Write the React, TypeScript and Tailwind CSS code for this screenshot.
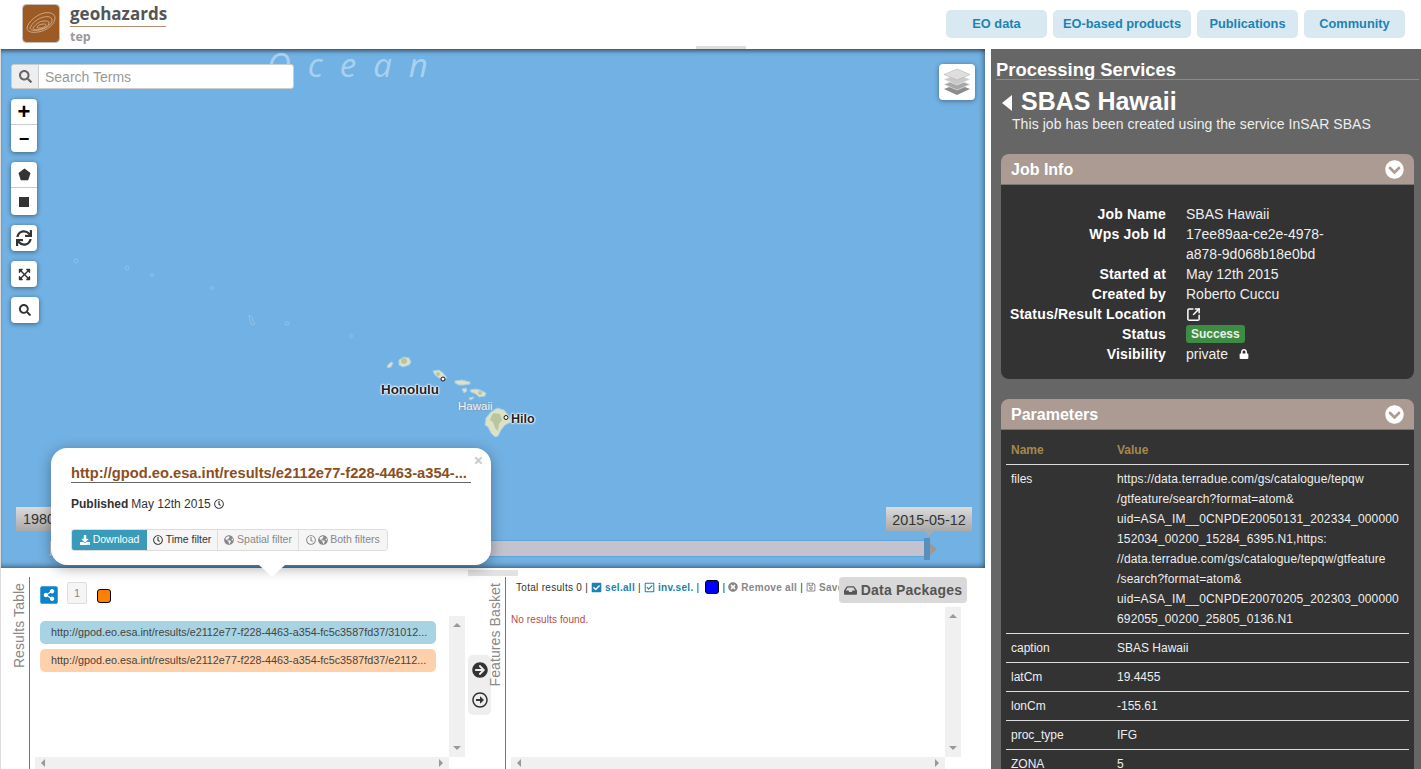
import React from "react";
import {
  FaSearch,
  FaSync,
  FaExpandArrowsAlt,
  FaShareAltSquare,
  FaArrowCircleRight,
  FaRegArrowAltCircleRight,
  FaRegClock,
  FaGlobeAmericas,
  FaDownload,
  FaCheckSquare,
  FaRegCheckSquare,
  FaPlusCircle,
  FaRegSave,
  FaInbox,
  FaLock,
  FaChevronCircleDown,
  FaTimes,
} from "react-icons/fa";
import { SquareArrowOutUpRight } from "lucide-react";

const navItems = [
  { label: "EO data", width: "w-[101px]" },
  { label: "EO-based products", width: "w-[138px]" },
  { label: "Publications", width: "w-[101px]" },
  { label: "Community", width: "w-[101px]" },
];

const jobRows = [
  { name: "Job Name", value: "SBAS Hawaii" },
  { name: "Wps Job Id", value: "17ee89aa-ce2e-4978-\na878-9d068b18e0bd" },
  { name: "Started at", value: "May 12th 2015" },
  { name: "Created by", value: "Roberto Cuccu" },
];

const filesLines = [
  "https://data.terradue.com/gs/catalogue/tepqw",
  "/gtfeature/search?format=atom&",
  "uid=ASA_IM__0CNPDE20050131_202334_000000",
  "152034_00200_15284_6395.N1,https:",
  "//data.terradue.com/gs/catalogue/tepqw/gtfeature",
  "/search?format=atom&",
  "uid=ASA_IM__0CNPDE20070205_202303_000000",
  "692055_00200_25805_0136.N1",
];

const paramRows = [
  { name: "caption", value: "SBAS Hawaii" },
  { name: "latCm", value: "19.4455" },
  { name: "lonCm", value: "-155.61" },
  { name: "proc_type", value: "IFG" },
  { name: "ZONA", value: "5" },
];

// map drawing: viewBox uses page coordinates
const MapArt = () => (
  <svg className="absolute inset-0" width="984" height="519" viewBox="1 49 984 519">
    <g fill="none" stroke="#8fc2ea" strokeWidth="1">
      <circle cx="76" cy="261" r="2" />
      <circle cx="127" cy="268" r="2" />
      <circle cx="152" cy="275" r="1.5" />
      <circle cx="212" cy="288" r="1.5" />
      <path d="M249 315l3 2 1 4 2 3-3 1-2-4z" />
      <rect x="285" y="322" width="4" height="3" rx="1" />
      <circle cx="351" cy="336" r="1.5" />
    </g>
    <g fill="#dde1c8" stroke="#a6cfe6" strokeWidth="1">
      <path d="M399 360l5-3 5 1 2 4-2 3-6 2-4-2z" />
      <path d="M387 366l4-4 2 1-2 4-3 1z" />
      <path d="M433 371l6-1 4 3 4 5-3 1-5-1-4-3z" />
      <path d="M455 381l7-1 8 2 0 2-6 1-5 0-4-2z" />
      <path d="M462 389l4-1 1 3-3 2z" />
      <path d="M470 390l6-1 4 1 6 3-1 3-6 1-3-3-5-2z" />
      <path d="M469 398l4-1 1 1-4 2z" />
      <path d="M497 408l7 2 5 6 2 6-6 3-4 5-3 6-3 1-4-4-3-6-3-2 1-7 5-6z" />
    </g>
    <g fill="#b9c7a0">
      <path d="M494 413l6 1 2 6-3 4-1 7-3-3-2-6-3-2 2-5z" />
      <circle cx="404" cy="361" r="3" />
      <circle cx="438" cy="374" r="2" />
      <circle cx="480" cy="393" r="2" />
    </g>
    <circle cx="443" cy="379" r="2" fill="#fff" stroke="#111" strokeWidth="1" />
    <circle cx="506" cy="417.5" r="2" fill="#fff" stroke="#111" strokeWidth="1" />
  </svg>
);

const ControlButton = ({ children, wide }: { children: React.ReactNode; wide?: boolean }) => (
  <div
    className={`flex h-[26px] items-center justify-center rounded-[4px] bg-white text-[#333] shadow-[0_1px_5px_rgba(0,0,0,0.45)] ${
      wide ? "w-[28px]" : "w-[26px]"
    }`}
  >
    {children}
  </div>
);

const ControlGroup = ({ top, bottom }: { top: React.ReactNode; bottom: React.ReactNode }) => (
  <div className="flex w-[26px] flex-col divide-y divide-[#ccc] rounded-[4px] bg-white text-[#333] shadow-[0_1px_5px_rgba(0,0,0,0.45)]">
    <div className="flex h-[26px] items-center justify-center">{top}</div>
    <div className="flex h-[27px] items-center justify-center">{bottom}</div>
  </div>
);

const VScroll = ({ h }: { h: string }) => (
  <div className={`flex w-[16px] shrink-0 flex-col items-center justify-between bg-[#f0f0f0] py-[7px] ${h}`}>
    <div className="h-0 w-0 border-x-[4px] border-b-[4px] border-x-transparent border-b-[#999]" />
    <div className="h-0 w-0 border-x-[4px] border-t-[4px] border-x-transparent border-t-[#999]" />
  </div>
);

const HScroll = () => (
  <div className="flex h-[12px] items-center justify-between bg-[#f0f0f0] px-[6px]">
    <div className="h-0 w-0 border-y-[4px] border-r-[4px] border-y-transparent border-r-[#999]" />
    <div className="h-0 w-0 border-y-[4px] border-l-[4px] border-y-transparent border-l-[#999]" />
  </div>
);

const PanelHeader = ({ title }: { title: string }) => (
  <div className="flex h-[31px] items-center justify-between rounded-t-[8px] border-b border-[#777] bg-[#ab9b93] px-[10px] pt-px text-[16px] font-bold text-white">
    <span>{title}</span>
    <FaChevronCircleDown className="text-[19px] text-white" />
  </div>
);

const SideLabel = ({ children }: { children: React.ReactNode }) => (
  <div className="rotate-180 text-[14px] leading-[16px] tracking-[0.1px] text-[#888] [writing-mode:vertical-rl]">
    {children}
  </div>
);

export default function App() {
  return (
    <div className="relative flex h-[769px] w-[1421px] flex-col overflow-hidden bg-white font-['Liberation_Sans',Arial,sans-serif]">
      {/* Header */}
      <header className="flex h-[49px] shrink-0 items-start justify-between pl-[22px] pr-[16px]">
        <div className="flex items-start pt-[4px]">
          <svg width="38" height="39" viewBox="0 0 38 39" className="rounded-[4px]">
            <rect x="0.5" y="0.5" width="37" height="38" rx="4" fill="#9c5a24" stroke="#c8c0b8" />
            <g fill="none" stroke="#d9b99c" strokeWidth="0.8">
              <path d="M5 24c1-6 9-13 17-15 5-1 11 0 11 5 0 6-8 13-17 14-6 1-11 0-11-4z" />
              <path d="M8 24c2-5 8-10 14-11 4-1 8 0 8 3 0 5-7 9-13 10-5 1-9 0-9-2z" />
              <path d="M11 24c2-3 6-7 11-7 3 0 5 0 5 2 0 3-5 6-9 6-3 1-7 1-7-1z" />
              <path d="M15 23c1-2 4-3 7-3 1 0 2 0 2 1 0 1-3 3-5 3-2 0-4 0-4-1z" />
            </g>
          </svg>
          <div className="ml-[10px] w-[96px] font-['Open_Sans',sans-serif]">
            <div className="h-[23px] whitespace-nowrap border-b border-[#b98f6f] pb-[2px] text-[17px] font-bold leading-[20px] text-[#555]">
              geohazards
            </div>
            <div className="mt-[2px] text-[12.5px] font-bold leading-[15px] text-[#999]">tep</div>
          </div>
        </div>
        <nav className="flex gap-[6px] pt-[10px]">
          {navItems.map((item) => (
            <div
              key={item.label}
              className={`flex h-[28px] items-center justify-center rounded-[5px] bg-[#d9e9f1] text-[12.8px] font-bold text-[#1c83b4] ${item.width}`}
            >
              {item.label}
            </div>
          ))}
        </nav>
      </header>

      <div className="flex min-h-0 flex-1">
        {/* Left column */}
        <div className="flex w-[991px] shrink-0 flex-col border-l border-[#dcdcdc] pr-[6px]">
          {/* Map */}
          <div className="relative z-10 h-[519px] w-[984px] shrink-0 bg-[#72b1e3] shadow-[inset_0_5px_4px_-3px_rgba(0,0,0,0.55),inset_0_-5px_5px_-3px_rgba(0,0,0,0.4),inset_-5px_0_5px_-3px_rgba(0,0,0,0.3)]">
            <MapArt />
            <div className="absolute left-[266px] top-[-6px] font-['Open_Sans',sans-serif] text-[33px] italic leading-[44px] tracking-[17px] text-[#a9d1ef]">
              Ocean
            </div>
            <div className="absolute left-[695px] top-[-3px] h-[3px] w-[50px] bg-[#ddd]" />

            {/* Map labels */}
            <span className="absolute left-[380px] top-[333px] text-[13.4px] font-bold leading-[16px] text-[#222] [text-shadow:0_0_2px_#fff,0_0_2px_#fff,0_0_2px_#fff,0_0_3px_#fff]">
              Honolulu
            </span>
            <span className="absolute left-[457px] top-[350px] text-[11.5px] leading-[14px] text-[#f2f2f2] [text-shadow:0_0_2px_#7a8a99]">
              Hawaii
            </span>
            <span className="absolute left-[510px] top-[362px] text-[12.5px] font-bold leading-[16px] text-[#222] [text-shadow:0_0_2px_#fff,0_0_2px_#fff,0_0_2px_#fff,0_0_3px_#fff]">
              Hilo
            </span>

            {/* Search */}
            <div className="absolute left-[10px] top-[15px] flex h-[25px] w-[283px] overflow-hidden rounded-[3px] border border-[#ccc] bg-white">
              <div className="flex w-[27px] items-center justify-center border-r border-[#ccc] bg-[#eee] text-[#666]">
                <FaSearch className="text-[13px]" />
              </div>
              <div className="pl-[6px] text-[14px] leading-[25px] text-[#999]">Search Terms</div>
            </div>

            {/* Map controls */}
            <div className="absolute left-[10px] top-[50px] flex flex-col items-start gap-[10px]">
              <ControlGroup
                top={<span className="text-[22px] font-bold leading-none text-black">+</span>}
                bottom={<span className="text-[18px] font-bold leading-none text-black">−</span>}
              />
              <ControlGroup
                top={
                  <svg width="13" height="13" viewBox="0 0 13 13">
                    <path d="M6.5 0.5l6 4.4-2.3 7.4H2.8L0.5 4.9z" fill="#333" />
                  </svg>
                }
                bottom={<div className="h-[10px] w-[10px] bg-[#333]" />}
              />
              <ControlButton>
                <FaSync className="text-[16px]" />
              </ControlButton>
              <ControlButton>
                <FaExpandArrowsAlt className="text-[13px]" />
              </ControlButton>
              <ControlButton wide>
                <FaSearch className="text-[12px]" />
              </ControlButton>
            </div>

            {/* Layers */}
            <div className="absolute left-[938px] top-[15px] flex h-[36px] w-[36px] items-center justify-center rounded-[4px] bg-white shadow-[0_1px_5px_rgba(0,0,0,0.4)]">
              <svg width="28" height="28" viewBox="0 0 28 28">
                <path d="M14 16l13 5-13 6-13-6z" fill="#8c8c8c" />
                <path d="M14 11l13 5.5L14 22 1 16.5z" fill="#a8a8a8" stroke="#eee" strokeWidth="0.6" />
                <path d="M14 6l13 5.500L14 17 1 11.500z" fill="#c9c9c9" stroke="#eee" strokeWidth="0.6" />
                <path d="M14 1l13 5.500L14 12 1 6.500z" fill="#dedede" stroke="#aaa" strokeWidth="0.5" />
              </svg>
            </div>

            {/* Timeline */}
            <div className="absolute left-[15px] top-[458px] h-[24px] w-[60px] bg-gradient-to-b from-[#dcdcdc] to-[#a9a9a9] pl-[7px] text-[14.4px] leading-[25px] text-[#333]">
              1980
            </div>
            <div className="absolute left-[49px] top-[491px] flex h-[17px] w-[887px] items-center">
              <div className="h-full flex-1 border-y border-[#62a3d8] bg-[#c3c3cf]" />
              <div className="h-[22px] w-[6px] bg-[#5b8fbb]" />
              <div className="h-0 w-0 border-y-[6px] border-l-[7px] border-y-transparent border-l-[#999]" />
            </div>
            <div className="absolute left-[885px] top-[458px] h-[24px] w-[86px] bg-gradient-to-b from-[#dcdcdc] to-[#a9a9a9] text-center text-[14.4px] leading-[26px] text-[#333]">
              2015-05-12
              <div className="absolute left-[38px] top-[24px] h-0 w-0 border-x-[5px] border-t-[5px] border-x-transparent border-t-[#aaa]" />
            </div>

            {/* Popup */}
            <div className="absolute left-[50px] top-[399px] z-20 h-[117px] w-[440px] rounded-[16px] bg-white px-[20px] pt-[17px] shadow-[0_3px_14px_rgba(0,0,0,0.35)]">
              <FaTimes className="absolute right-[7px] top-[7px] text-[11px] text-[#ccc]" />
              <div className="whitespace-nowrap border-b border-[#666] pb-[1px] text-[14.7px] font-bold leading-[16px] text-[#8a4f1d]">
                http://gpod.eo.esa.int/results/e2112e77-f228-4463-a354-...
              </div>
              <div className="mt-[14px] flex items-center gap-[3px] text-[12px] leading-[14px] text-[#333]">
                <b>Published</b> May 12th 2015 <FaRegClock className="text-[10px]" />
              </div>
              <div className="mt-[18px] flex h-[22px] w-[317px] overflow-hidden rounded-[3px] border border-[#ddd] text-[10.5px]">
                <div className="flex w-[75px] items-center justify-center gap-[3px] bg-[#3a9ab9] text-white">
                  <FaDownload className="text-[10px]" /> Download
                </div>
                <div className="flex w-[71px] items-center justify-center gap-[3px] border-r border-[#ddd] bg-[#f5f5f5] text-[#333]">
                  <FaRegClock className="text-[10px]" /> Time filter
                </div>
                <div className="flex w-[81px] items-center justify-center gap-[3px] border-r border-[#ddd] bg-[#f5f5f5] text-[#888]">
                  <FaGlobeAmericas className="text-[10px]" /> Spatial filter
                </div>
                <div className="flex flex-1 items-center justify-center gap-[2px] bg-[#f5f5f5] text-[#888]">
                  <FaRegClock className="text-[10px]" />
                  <FaGlobeAmericas className="text-[10px]" /> Both filters
                </div>
              </div>
              <div className="absolute left-[208px] top-full h-0 w-0 border-x-[13px] border-t-[12px] border-x-transparent border-t-white" />
            </div>
          </div>

          {/* Bottom panels */}
          <div className="relative flex min-h-0 flex-1">
            <div className="absolute left-[467px] top-[2px] h-[6px] w-[50px] bg-[#e2e2e2]" />

            {/* Results table */}
            <div className="w-[28px] shrink-0 pl-[10px] pt-[15px]">
              <SideLabel>Results Table</SideLabel>
            </div>
            <div className="mt-[9px] flex w-[436px] shrink-0 flex-col border-l border-[#777] pl-[5px]">
              <div className="flex h-[39px] items-start pl-[4px]">
                <FaShareAltSquare className="mt-[8px] text-[20px] leading-none text-[#0d84c7]" />
                <div className="ml-[8px] mt-[5px] flex h-[22px] w-[20px] items-center justify-center rounded-[2px] border border-[#ddd] bg-[#f5f5f5] text-[11px] text-[#888]">
                  1
                </div>
                <div className="ml-[10px] mt-[12px] h-[14px] w-[14px] rounded-[3px] border border-black bg-[#ff7f00]" />
              </div>
              <div className="flex">
                <div className="flex h-[141px] w-[414px] flex-col gap-[5px] pl-[5px] pr-[13px] pt-[5px]">
                  <div className="whitespace-nowrap rounded-[5px] bg-[#a8d3e3] pl-[11px] text-[10.8px] leading-[23px] text-[#444]">
                    http://gpod.eo.esa.int/results/e2112e77-f228-4463-a354-fc5c3587fd37/31012...
                  </div>
                  <div className="whitespace-nowrap rounded-[5px] bg-[#ffd1ab] pl-[11px] text-[10.8px] leading-[23px] text-[#444]">
                    http://gpod.eo.esa.int/results/e2112e77-f228-4463-a354-fc5c3587fd37/e2112...
                  </div>
                </div>
                <VScroll h="h-[141px]" />
              </div>
              <div className="w-[414px]">
                <HScroll />
              </div>
            </div>

            {/* Transfer buttons */}
            <div className="w-[26px] shrink-0 pl-[3px] pt-[87px]">
              <div className="flex h-[60px] w-[23px] flex-col items-center justify-center gap-[14px] rounded-[5px] bg-[#eee] text-[#333]">
                <FaArrowCircleRight className="text-[16px]" />
                <FaRegArrowAltCircleRight className="text-[16px]" />
              </div>
            </div>

            {/* Features basket */}
            <div className="ml-[-4px] w-[18px] shrink-0 pt-[15px]">
              <SideLabel>Features Basket</SideLabel>
            </div>
            <div className="relative mt-[9px] flex flex-1 flex-col border-l border-[#777] pl-[5px]">
              <div className="flex h-[33px] items-start gap-[3px] whitespace-nowrap pl-[5px] pt-[5px] text-[10px] leading-[12px] tracking-[0.3px] text-[#333]">
                <span>Total results</span>
                <span>0 |</span>
                <FaCheckSquare className="text-[11px] text-[#1a82b5]" />
                <b className="font-bold text-[#1a82b5]">sel.all</b>
                <span>|</span>
                <FaRegCheckSquare className="text-[11px] text-[#1a82b5]" />
                <b className="font-bold text-[#1a82b5]">inv.sel.</b>
                <span>|</span>
                <div className="ml-[3px] mt-[-2px] h-[14px] w-[14px] rounded-[3px] border border-black bg-[#0000ff]" />
                <span>|</span>
                <FaPlusCircle className="rotate-45 text-[10px] text-[#888]" />
                <b className="font-bold text-[#888]">Remove all</b>
                <span>|</span>
                <FaRegSave className="text-[10px] text-[#888]" />
                <b className="font-bold text-[#888]">Save</b>
              </div>
              <div className="flex">
                <div className="h-[150px] w-[434px] pt-[7px] text-[10px] leading-[12px] tracking-[0.1px] text-[#b94a48]">
                  No results found.
                </div>
                <VScroll h="h-[150px]" />
              </div>
              <div className="w-[434px]">
                <HScroll />
              </div>
              <div className="absolute left-[333px] top-0 flex h-[26px] w-[128px] items-center justify-center gap-[4px] rounded-[4px] bg-[#d9d9d9] text-[14px] font-bold tracking-[0.2px] text-[#555]">
                <FaInbox className="text-[13px]" />
                Data Packages
              </div>
            </div>
          </div>
        </div>

        {/* Right panel */}
        <aside className="w-[430px] shrink-0 overflow-hidden bg-[#666] pl-[5px] pr-[2px] text-white">
          <div className="border-b border-[#8a8a8a] pt-[12px] text-[18.4px] font-bold leading-[18px]">
            Processing Services
          </div>
          <div className="flex items-center pl-[6px] pt-[8px]">
            <div className="mt-[4px] h-0 w-0 border-y-[8px] border-r-[10px] border-y-transparent border-r-white" />
            <span className="ml-[9px] text-[25px] font-bold leading-[26px]">SBAS Hawaii</span>
          </div>
          <div className="pl-[16px] pt-[1px] text-[14px] leading-[18px] tracking-[0.06px] text-[#eee]">
            This job has been created using the service InSAR SBAS
          </div>

          {/* Job info */}
          <section className="mx-[5px] mt-[21px]">
            <PanelHeader title="Job Info" />
            <div className="rounded-b-[8px] bg-[#333] pb-[15px] pt-[19px] text-[14px] leading-[20px]">
              {jobRows.map((row) => (
                <div key={row.name} className="flex">
                  <div className="w-[165px] text-right font-bold tracking-[0.2px]">{row.name}</div>
                  <div className="ml-[20px] whitespace-pre-line text-[#eee]">{row.value}</div>
                </div>
              ))}
              <div className="flex">
                <div className="w-[165px] whitespace-nowrap text-right font-bold tracking-[0.2px]">
                  Status/Result Location
                </div>
                <div className="ml-[20px] flex items-center">
                  <SquareArrowOutUpRight size={15} strokeWidth={2.4} />
                </div>
              </div>
              <div className="flex">
                <div className="w-[165px] text-right font-bold tracking-[0.2px]">Status</div>
                <div className="ml-[20px] flex items-center">
                  <span className="rounded-[3px] bg-[#3e8b45] px-[5px] text-[12px] font-bold leading-[18px] text-[#e8f0e8]">
                    Success
                  </span>
                </div>
              </div>
              <div className="flex">
                <div className="w-[165px] text-right font-bold tracking-[0.2px]">Visibility</div>
                <div className="ml-[20px] flex items-center gap-[11px] text-[#eee]">
                  private <FaLock className="text-[10px] text-white" />
                </div>
              </div>
            </div>
          </section>

          {/* Parameters */}
          <section className="mx-[5px] mt-[20px]">
            <PanelHeader title="Parameters" />
            <div className="bg-[#333] px-[5px] pt-[10px] text-[12px] leading-[20px] text-[#eee]">
              <div className="flex border-b border-[#ddd] px-[5px] pb-[4px] font-bold text-[#a5884f]">
                <div className="w-[106px]">Name</div>
                <div>Value</div>
              </div>
              <div className="flex border-b border-[#ddd] px-[5px] py-[4px]">
                <div className="w-[106px]">files</div>
                <div className="tracking-[0.15px]">
                  {filesLines.map((line) => (
                    <div key={line} className="whitespace-nowrap">
                      {line}
                    </div>
                  ))}
                </div>
              </div>
              {paramRows.map((row) => (
                <div key={row.name} className="flex border-b border-[#ddd] px-[5px] py-[4px]">
                  <div className="w-[106px]">{row.name}</div>
                  <div>{row.value}</div>
                </div>
              ))}
            </div>
          </section>
        </aside>
      </div>
    </div>
  );
}
